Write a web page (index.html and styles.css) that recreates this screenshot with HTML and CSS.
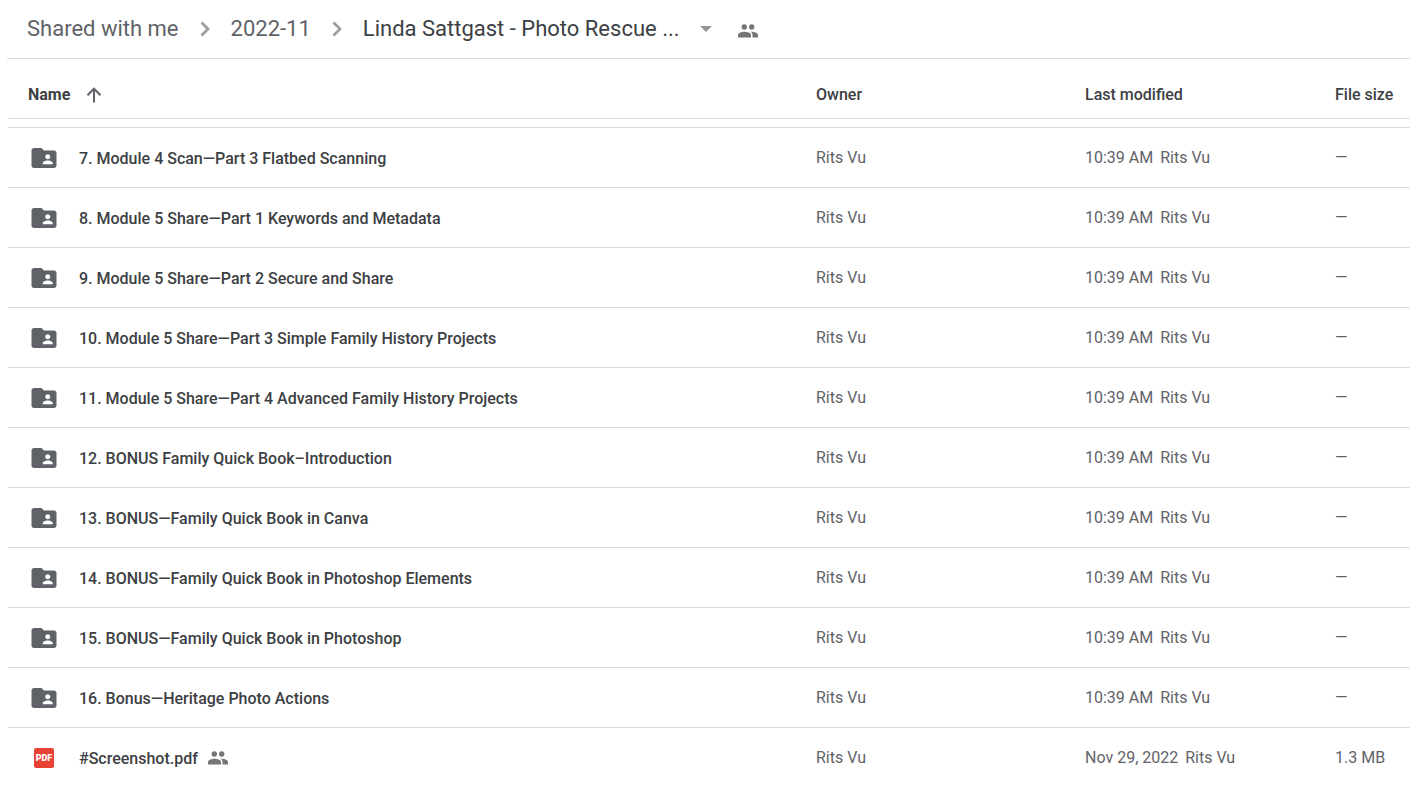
FILE: index.html
```html
<!DOCTYPE html>
<html lang="en">
<head>
    <meta charset="UTF-8">
    <meta name="viewport" content="width=device-width, initial-scale=1.0">
    <title>Linda Sattgast - Photo Rescue</title>
    <link rel="stylesheet" href="styles.css">
</head>
<body>
    <svg class="sprite" aria-hidden="true">
        <symbol id="folder" viewBox="0 0 24 24">
            <path d="M20 6h-8l-2-2H4c-1.1 0-1.99.9-1.99 2L2 18c0 1.1.9 2 2 2h16c1.1 0 2-.9 2-2V8c0-1.1-.9-2-2-2zm-5 3c1.1 0 2 .9 2 2s-.9 2-2 2-2-.9-2-2 .9-2 2-2zm4 8h-8v-1c0-1.33 2.67-2 4-2s4 .67 4 2v1z"/>
        </symbol>
        <symbol id="people" viewBox="0 0 20 14">
            <circle cx="6.3" cy="3" r="2.7"/>
            <circle cx="13.7" cy="3" r="2.7"/>
            <path d="M0 13.5V11c0-2.3 4-3.3 6.5-3.3S13 8.700 13 11v2.500z"/>
            <path d="M12.600 7.700c3.400-.1 7.400 1 7.400 3.300v2.500h-5.500V11c0-1.500-.8-2.600-1.900-3.300z"/>
        </symbol>
        <symbol id="chevron" viewBox="0 0 12 16">
            <path d="M2.500 1.500L9 8l-6.500 6.500" fill="none" stroke="currentColor" stroke-width="2.800"/>
        </symbol>
    </svg>

    <header class="header">
        <nav class="breadcrumb" aria-label="Breadcrumb">
            <a href="#">Shared with me</a>
            <svg class="chevron"><use href="#chevron"/></svg>
            <a href="#">2022-11</a>
            <svg class="chevron"><use href="#chevron"/></svg>
            <button type="button" class="current">
                Linda Sattgast - Photo Rescue ...
                <svg class="caret" viewBox="0 0 12 6"><path d="M0 0h12L6 6z"/></svg>
            </button>
        </nav>
        <button type="button" class="share" aria-label="Manage access">
            <svg class="people"><use href="#people"/></svg>
        </button>
    </header>

    <main class="content">
        <table class="files">
            <thead>
                <tr>
                    <th class="col-name">
                        <button type="button" class="sort">
                            Name
                            <svg class="arrow" viewBox="0 0 16 16"><path d="M8 15.500V2M1.500 8.200L8 1.700l6.500 6.500"/></svg>
                        </button>
                    </th>
                    <th class="col-owner">Owner</th>
                    <th class="col-modified">Last modified</th>
                    <th class="col-size">File size</th>
                </tr>
            </thead>
            <tbody>
                <tr>
                    <td><a href="#" class="file"><svg class="icon"><use href="#folder"/></svg><span class="title">7. Module 4 Scan—Part 3 Flatbed Scanning</span></a></td>
                    <td>Rits Vu</td>
                    <td>10:39 AM <span class="by">Rits Vu</span></td>
                    <td>—</td>
                </tr>
                <tr>
                    <td><a href="#" class="file"><svg class="icon"><use href="#folder"/></svg><span class="title">8. Module 5 Share—Part 1 Keywords and Metadata</span></a></td>
                    <td>Rits Vu</td>
                    <td>10:39 AM <span class="by">Rits Vu</span></td>
                    <td>—</td>
                </tr>
                <tr>
                    <td><a href="#" class="file"><svg class="icon"><use href="#folder"/></svg><span class="title">9. Module 5 Share—Part 2 Secure and Share</span></a></td>
                    <td>Rits Vu</td>
                    <td>10:39 AM <span class="by">Rits Vu</span></td>
                    <td>—</td>
                </tr>
                <tr>
                    <td><a href="#" class="file"><svg class="icon"><use href="#folder"/></svg><span class="title">10. Module 5 Share—Part 3 Simple Family History Projects</span></a></td>
                    <td>Rits Vu</td>
                    <td>10:39 AM <span class="by">Rits Vu</span></td>
                    <td>—</td>
                </tr>
                <tr>
                    <td><a href="#" class="file"><svg class="icon"><use href="#folder"/></svg><span class="title">11. Module 5 Share—Part 4 Advanced Family History Projects</span></a></td>
                    <td>Rits Vu</td>
                    <td>10:39 AM <span class="by">Rits Vu</span></td>
                    <td>—</td>
                </tr>
                <tr>
                    <td><a href="#" class="file"><svg class="icon"><use href="#folder"/></svg><span class="title">12. BONUS Family Quick Book–Introduction</span></a></td>
                    <td>Rits Vu</td>
                    <td>10:39 AM <span class="by">Rits Vu</span></td>
                    <td>—</td>
                </tr>
                <tr>
                    <td><a href="#" class="file"><svg class="icon"><use href="#folder"/></svg><span class="title">13. BONUS—Family Quick Book in Canva</span></a></td>
                    <td>Rits Vu</td>
                    <td>10:39 AM <span class="by">Rits Vu</span></td>
                    <td>—</td>
                </tr>
                <tr>
                    <td><a href="#" class="file"><svg class="icon"><use href="#folder"/></svg><span class="title">14. BONUS—Family Quick Book in Photoshop Elements</span></a></td>
                    <td>Rits Vu</td>
                    <td>10:39 AM <span class="by">Rits Vu</span></td>
                    <td>—</td>
                </tr>
                <tr>
                    <td><a href="#" class="file"><svg class="icon"><use href="#folder"/></svg><span class="title">15. BONUS—Family Quick Book in Photoshop</span></a></td>
                    <td>Rits Vu</td>
                    <td>10:39 AM <span class="by">Rits Vu</span></td>
                    <td>—</td>
                </tr>
                <tr>
                    <td><a href="#" class="file"><svg class="icon"><use href="#folder"/></svg><span class="title">16. Bonus—Heritage Photo Actions</span></a></td>
                    <td>Rits Vu</td>
                    <td>10:39 AM <span class="by">Rits Vu</span></td>
                    <td>—</td>
                </tr>
                <tr>
                    <td><a href="#" class="file"><span class="icon pdf">PDF</span><span class="title">#Screenshot.pdf</span><svg class="people"><use href="#people"/></svg></a></td>
                    <td>Rits Vu</td>
                    <td>Nov 29, 2022 <span class="by">Rits Vu</span></td>
                    <td>1.3 MB</td>
                </tr>
            </tbody>
        </table>
    </main>
</body>
</html>
```

FILE: styles.css
```css
* {
    box-sizing: border-box;
}
body {
    margin: 0;
    background-color: #fff;
    font-family: Roboto, "Liberation Sans", sans-serif;
    font-size: 16px;
    line-height: 20px;
    color: #5f6368;
}
a {
    color: inherit;
    text-decoration: none;
}
button {
    padding: 0;
    border: none;
    background: none;
    font: inherit;
    color: inherit;
    cursor: pointer;
}
svg {
    flex: none;
    fill: currentColor;
}
.sprite {
    display: none;
}
.header {
    display: flex;
    align-items: center;
    gap: 26px;
    height: 59px;
    margin-left: 7px;
    padding: 0 20px;
    border-bottom: 1px solid #dadce0;
}
.breadcrumb {
    display: flex;
    align-items: center;
    gap: 20px;
    font-size: 22px;
    line-height: 28px;
    white-space: nowrap;
}
.chevron {
    width: 12px;
    height: 16px;
    color: #9e9e9e;
}
.current {
    display: flex;
    align-items: center;
    gap: 20px;
    color: #3c4043;
}
.caret {
    width: 12px;
    height: 6px;
    color: #949494;
}
.share {
    display: flex;
    padding-top: 3px;
}
.people {
    width: 20px;
    height: 14px;
    color: #757575;
}
.content {
    padding-left: 8px;
}
.files {
    width: 100%;
    table-layout: fixed;
    border-collapse: separate;
    border-spacing: 0;
}
/* gap between the header and the scrolled list */
.files tbody::before {
    content: "";
    display: block;
    height: 8px;
}
.files th {
    height: 60px;
    padding: 12px 0 0;
    border-bottom: 1px solid #dadce0;
    text-align: left;
    font-weight: 500;
    color: #3c4043;
    white-space: nowrap;
}
.col-owner {
    width: 269px;
}
.col-modified {
    width: 250px;
}
.col-size {
    width: 75px;
}
.sort {
    display: flex;
    align-items: center;
    gap: 16px;
    padding-left: 20px;
    font-weight: 700;
}
.arrow {
    width: 16px;
    height: 16px;
    fill: none;
    stroke: #5f6368;
    stroke-width: 2;
}
.files td {
    height: 60px;
    padding: 0;
    border-top: 1px solid #dadce0;
    white-space: nowrap;
}
.file {
    display: flex;
    align-items: center;
    padding-left: 21px;
    font-weight: 500;
    color: #3c4043;
}
.icon {
    width: 30px;
    height: 30px;
    margin-right: 20px;
    color: #5f6368;
}
.title {
    padding-top: 2px;
    margin-right: 10px;
}
.pdf {
    width: 20px;
    height: 20px;
    margin-left: 5px;
    margin-right: 25px;
    border-radius: 2px;
    background-color: #ea4335;
    font-size: 9px;
    font-weight: 900;
    text-align: center;
    color: #fff;
}
.by {
    margin-left: 3px;
}
```
